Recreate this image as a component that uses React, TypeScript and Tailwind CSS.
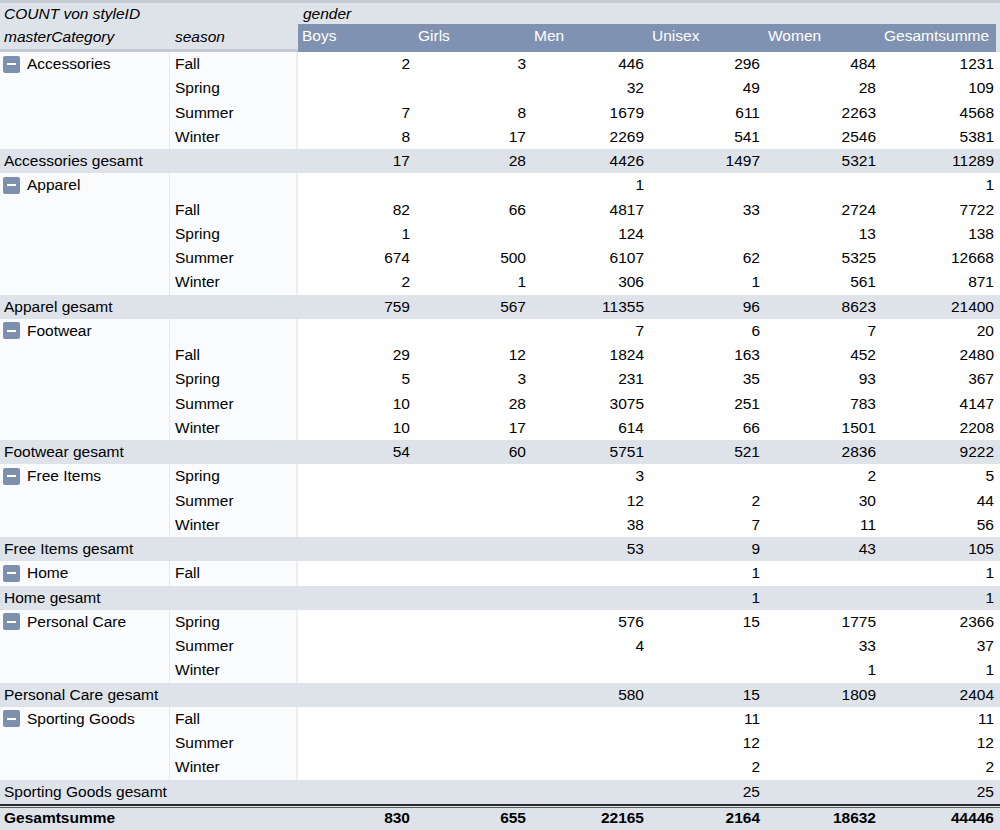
import React from "react";

type Row = { season: string; v: (number | null)[] };
type Group = { name: string; rows: Row[]; total: (number | null)[] };

const _ = null;
const groups: Group[] = [
  {
    name: "Accessories",
    rows: [
      { season: "Fall", v: [2, 3, 446, 296, 484, 1231] },
      { season: "Spring", v: [_, _, 32, 49, 28, 109] },
      { season: "Summer", v: [7, 8, 1679, 611, 2263, 4568] },
      { season: "Winter", v: [8, 17, 2269, 541, 2546, 5381] },
    ],
    total: [17, 28, 4426, 1497, 5321, 11289],
  },
  {
    name: "Apparel",
    rows: [
      { season: "", v: [_, _, 1, _, _, 1] },
      { season: "Fall", v: [82, 66, 4817, 33, 2724, 7722] },
      { season: "Spring", v: [1, _, 124, _, 13, 138] },
      { season: "Summer", v: [674, 500, 6107, 62, 5325, 12668] },
      { season: "Winter", v: [2, 1, 306, 1, 561, 871] },
    ],
    total: [759, 567, 11355, 96, 8623, 21400],
  },
  {
    name: "Footwear",
    rows: [
      { season: "", v: [_, _, 7, 6, 7, 20] },
      { season: "Fall", v: [29, 12, 1824, 163, 452, 2480] },
      { season: "Spring", v: [5, 3, 231, 35, 93, 367] },
      { season: "Summer", v: [10, 28, 3075, 251, 783, 4147] },
      { season: "Winter", v: [10, 17, 614, 66, 1501, 2208] },
    ],
    total: [54, 60, 5751, 521, 2836, 9222],
  },
  {
    name: "Free Items",
    rows: [
      { season: "Spring", v: [_, _, 3, _, 2, 5] },
      { season: "Summer", v: [_, _, 12, 2, 30, 44] },
      { season: "Winter", v: [_, _, 38, 7, 11, 56] },
    ],
    total: [_, _, 53, 9, 43, 105],
  },
  {
    name: "Home",
    rows: [{ season: "Fall", v: [_, _, _, 1, _, 1] }],
    total: [_, _, _, 1, _, 1],
  },
  {
    name: "Personal Care",
    rows: [
      { season: "Spring", v: [_, _, 576, 15, 1775, 2366] },
      { season: "Summer", v: [_, _, 4, _, 33, 37] },
      { season: "Winter", v: [_, _, _, _, 1, 1] },
    ],
    total: [_, _, 580, 15, 1809, 2404],
  },
  {
    name: "Sporting Goods",
    rows: [
      { season: "Fall", v: [_, _, _, 11, _, 11] },
      { season: "Summer", v: [_, _, _, 12, _, 12] },
      { season: "Winter", v: [_, _, _, 2, _, 2] },
    ],
    total: [_, _, _, 25, _, 25],
  },
];

const grand = [830, 655, 22165, 2164, 18632, 44446];
const heads = ["Boys", "Girls", "Men", "Unisex", "Women", "Gesamtsumme"];
const widths = ["w-[116px]", "w-[116px]", "w-[118px]", "w-[116px]", "w-[116px]", "w-[118px]"];

function Minus() {
  return (
    <span className="ml-[3px] mr-[7px] flex h-[17px] w-[17px] shrink-0 items-center justify-center rounded-[2px] bg-[#7d90ae]">
      <span className="h-[2px] w-[9px] bg-white" />
    </span>
  );
}

function Nums({ v, bold }: { v: (number | null)[]; bold?: boolean }) {
  return (
    <>
      {v.map((n, i) => (
        <div
          key={i}
          className={`${widths[i]} shrink-0 pr-[4px] text-right ${bold ? "font-bold" : ""}`}
        >
          {n ?? ""}
        </div>
      ))}
    </>
  );
}

export default function App() {
  return (
    <div
      className="w-[1000px] h-[830px] overflow-hidden bg-white text-[15.5px] leading-[20px] text-black"
      style={{ fontFamily: '"Liberation Sans", Arial, sans-serif' }}
    >
      <div className="h-[3px] bg-[#c7ccd4]" />
      {/* header row 1 */}
      <div className="flex h-[21px] items-center bg-[#dee3ea] italic">
        <div className="w-[298px] shrink-0 pl-[4px]">COUNT von styleID</div>
        <div className="pl-[5px]">gender</div>
      </div>
      {/* header row 2 */}
      <div className="flex h-[28px] bg-[#dee3ea]">
        <div className="flex w-[170px] shrink-0 items-center border-b-[3px] border-[#c3cad6] pl-[4px] pt-[1px] italic">
          masterCategory
        </div>
        <div className="flex w-[128px] shrink-0 items-center border-b-[3px] border-[#c3cad6] pl-[5px] pt-[1px] italic">
          season
        </div>
        {heads.map((h, i) => (
          <div
            key={h}
            className={`${widths[i]} shrink-0 bg-[#8092b1] pl-[4px] pt-[2px] text-white ${i === 5 ? "border-r-2 border-[#dee3ea]" : ""}`}
          >
            {h}
          </div>
        ))}
      </div>
      {/* body */}
      {groups.map((g) => (
        <React.Fragment key={g.name}>
          {g.rows.map((r, ri) => (
            <div key={ri} className="flex h-[24.25px] items-center">
              <div className="flex h-full w-[170px] shrink-0 items-center border-r border-[#e6e9ee] bg-[#fafbfc]">
                {ri === 0 && (
                  <>
                    <Minus />
                    <span>{g.name}</span>
                  </>
                )}
              </div>
              <div className="flex h-full w-[128px] shrink-0 items-center border-r-2 border-[#eceef2] bg-[#fafbfc] pl-[5px]">
                {r.season}
              </div>
              <Nums v={r.v} />
            </div>
          ))}
          <div className="flex h-[24.25px] items-center bg-[#dee3ea]">
            <div className="w-[298px] shrink-0 pl-[4px]">{g.name} gesamt</div>
            <Nums v={g.total} />
          </div>
        </React.Fragment>
      ))}
      {/* grand total */}
      <div className="h-[2px] bg-[#2b2b2b]" />
      <div className="h-[1px] bg-[#dee3ea]" />
      <div className="h-[1px] bg-[#5a5a5a]" />
      <div className="flex h-[24px] items-center bg-[#dee3ea] pb-[4px]">
        <div className="w-[298px] shrink-0 pl-[4px] font-bold">Gesamtsumme</div>
        <Nums v={grand} bold />
      </div>
    </div>
  );
}
